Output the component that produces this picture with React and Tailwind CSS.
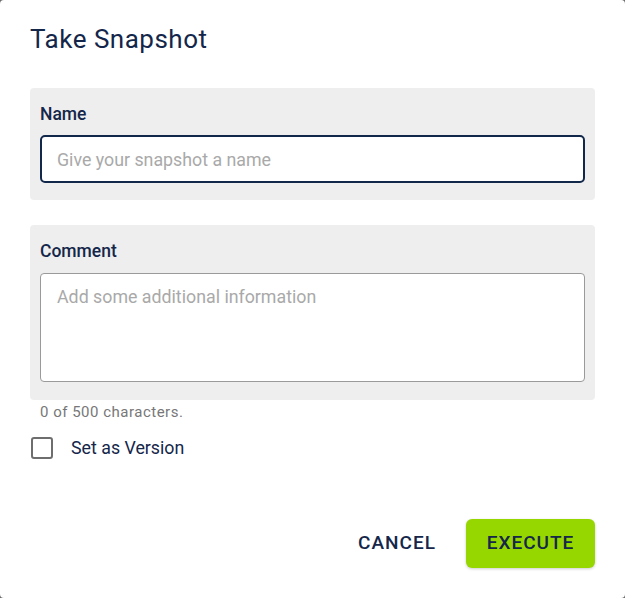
import React, { useState } from 'react';

const App = () => {
  const [name, setName] = useState('');
  const [comment, setComment] = useState('');
  const [isVersion, setIsVersion] = useState(false);

  return (
    <div className="w-[625px] h-[598px] bg-[#6b6b6b]" style={{ fontFamily: 'Roboto, "Liberation Sans", sans-serif' }}>
      <div className="w-full h-full bg-white rounded-[4px] px-[30px] pt-[22px] flex flex-col">
        {/* Titre */}
        <h1 className="text-[26px] leading-[34px] text-[#14264a] font-normal tracking-[0.5px]">Take Snapshot</h1>

        {/* Nom */}
        <div className="mt-[32px] bg-[#eeeeee] rounded-[4px] px-[10px] pt-[16px] pb-[17px]">
          <label className="block text-[17.5px] leading-[20px] font-medium text-[#14264a]">Name</label>
          <input
            value={name}
            onChange={function(e) { setName(e.target.value); }}
            placeholder="Give your snapshot a name"
            className="mt-[11px] w-full h-[48px] px-[15px] bg-white border-2 border-[#12284b] rounded-[5px] text-[17.8px] text-[#14264a] placeholder:text-[#a9a9a9] outline-none"
          />
        </div>

        {/* Commentaire */}
        <div className="mt-[25px] bg-[#eeeeee] rounded-[4px] px-[10px] pt-[16px] pb-[18px]">
          <label className="block text-[17.5px] leading-[20px] font-medium text-[#14264a]">Comment</label>
          <textarea
            value={comment}
            onChange={function(e) { setComment(e.target.value.slice(0, 500)); }}
            placeholder="Add some additional information"
            className="mt-[12px] block w-full h-[109px] px-[16px] py-[13px] bg-white border border-[#9a9a9a] rounded-[4px] text-[17.8px] leading-[20px] text-[#14264a] placeholder:text-[#a9a9a9] outline-none resize-none"
          />
        </div>
        <div className="mt-[4px] pl-[10px] text-[15px] leading-[16px] text-[#777777] tracking-[0.5px]">{comment.length} of 500 characters.</div>

        {/* Version */}
        <label className="mt-[15px] flex items-center gap-[18px] cursor-pointer">
          <span
            onClick={function() { setIsVersion(!isVersion); }}
            className={'w-[22px] h-[22px] ml-px rounded-[3px] border-2 ' + (isVersion ? 'bg-[#14264a] border-[#14264a]' : 'border-[#6e6e6e] bg-white')}
          ></span>
          <span className="text-[17.8px] text-[#14264a]">Set as Version</span>
        </label>

        {/* Boutons */}
        <div className="mt-[57px] flex justify-end items-center gap-[20px]">
          <button className="h-[49px] px-[10px] text-[19px] font-medium tracking-[1px] text-[#14264a]">CANCEL</button>
          <button className="h-[49px] w-[129px] rounded-[6px] bg-[#97d700] text-[19px] font-medium tracking-[1px] text-[#14264a] shadow-[0_1px_3px_rgba(0,0,0,0.2)]">EXECUTE</button>
        </div>
      </div>
    </div>
  );
};

export default App;
